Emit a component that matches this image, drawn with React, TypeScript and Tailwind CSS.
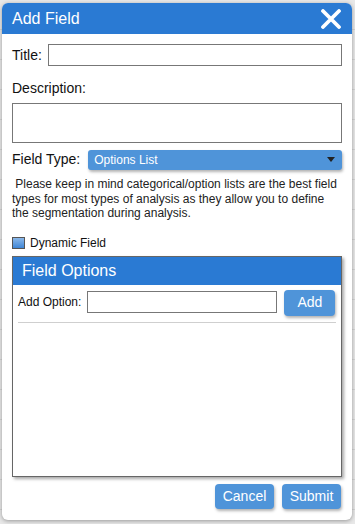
import { useState } from "react";

const CloseIcon = () => (
  <svg width="22" height="20" viewBox="0 0 22 20" aria-hidden={true}>
    <path
      d="M3 2 L19 18 M19 2 L3 18"
      stroke="white"
      strokeWidth="3.8"
      strokeLinecap="round"
    />
  </svg>
);

const FieldOptionsPanel = () => (
  <div className="mt-[4px] h-[221px] w-[330px] border border-[#666] bg-white shadow-[2px_2px_3px_rgba(0,0,0,0.35)] flex flex-col">
    <div className="h-[28px] bg-[#2a7ad3] pl-[9px] flex items-center text-[16px] text-white">
      Field Options
    </div>
    <div className="px-[5px] pt-[5px]">
      <div className="flex items-start">
        <span className="mt-[3px] text-[12px] text-[#111]">Add Option:</span>
        <input className="ml-[6px] mt-[1px] h-[22px] w-[190px] border border-[#777] bg-white outline-none" />
        <button className="ml-[7px] h-[26px] w-[51px] rounded-[4px] bg-[#4f94d9] text-[14px] text-white shadow-[1px_2px_3px_rgba(0,0,0,0.3)]">
          Add
        </button>
      </div>
      <div className="mt-[6px] h-px bg-[#cfcfcf]" />
    </div>
  </div>
);

export default function App() {
  const [dynamic, setDynamic] = useState(false);

  return (
    <div
      className="w-[355px] h-[524px] overflow-hidden bg-[#e8e8e8] bg-[repeating-linear-gradient(to_bottom,transparent_0px,transparent_29px,#d6d6d6_29px,#d6d6d6_30px)] pl-[2px] pt-[3px]"
      style={{ fontFamily: '"Liberation Sans", Arial, sans-serif' }}
    >
      <div className="w-[350px] h-[517px] rounded-[6px] bg-white shadow-[0_1px_4px_rgba(0,0,0,0.35)] flex flex-col">
        <div className="h-[31px] rounded-t-[6px] bg-[#2a7ad3] pl-[10px] pr-[10px] flex items-center justify-between">
          <span className="text-[16px] text-white">Add Field</span>
          <CloseIcon />
        </div>

        <div className="px-[10px] pt-[10px] flex flex-col flex-1">
          <div className="flex items-center">
            <span className="text-[14px] text-[#111]">Title:</span>
            <input className="ml-[6px] h-[22px] flex-1 border border-[#777] bg-white outline-none" />
          </div>

          <div className="mt-[12px] text-[14px] text-[#111]">Description:</div>
          <textarea className="mt-[4px] h-[40px] w-[330px] resize-none border border-[#777] bg-white outline-none" />

          <div className="mt-[6px] flex items-center">
            <span className="text-[14px] text-[#111]">Field Type:</span>
            <div className="ml-[8px] h-[20px] flex-1 rounded-[3px] bg-[#4f94d9] pl-[6px] pr-[7px] flex items-center justify-between shadow-[1px_2px_3px_rgba(0,0,0,0.3)]">
              <span className="text-[12px] text-white">Options List</span>
              <svg width="8" height="5" viewBox="0 0 8 5" aria-hidden={true}>
                <path d="M0 0 H8 L4 5 Z" fill="#222" />
              </svg>
            </div>
          </div>

          <p className="mt-[7px] text-[12px] leading-[14.5px] text-[#222]">
            &nbsp;Please keep in mind categorical/option lists are the best field
            types for most types of analysis as they allow you to define the
            segmentation during analysis.
          </p>

          <label className="mt-[13px] flex items-center gap-[5px]">
            <span
              onClick={() => setDynamic(!dynamic)}
              className="h-[12px] w-[13px] border border-[#555] bg-[linear-gradient(to_bottom,#8ab8ea,#3f86d6)]"
            />
            <span className="text-[12px] text-[#111]">Dynamic Field</span>
          </label>

          <FieldOptionsPanel />

          <div className="mt-[7px] flex justify-end gap-[8px] pr-px">
            <button className="h-[25px] w-[59px] rounded-[4px] bg-[#4f94d9] text-[14px] text-white shadow-[1px_2px_3px_rgba(0,0,0,0.3)]">
              Cancel
            </button>
            <button className="h-[25px] w-[59px] rounded-[4px] bg-[#4f94d9] text-[14px] text-white shadow-[1px_2px_3px_rgba(0,0,0,0.3)]">
              Submit
            </button>
          </div>
        </div>
      </div>
    </div>
  );
}
